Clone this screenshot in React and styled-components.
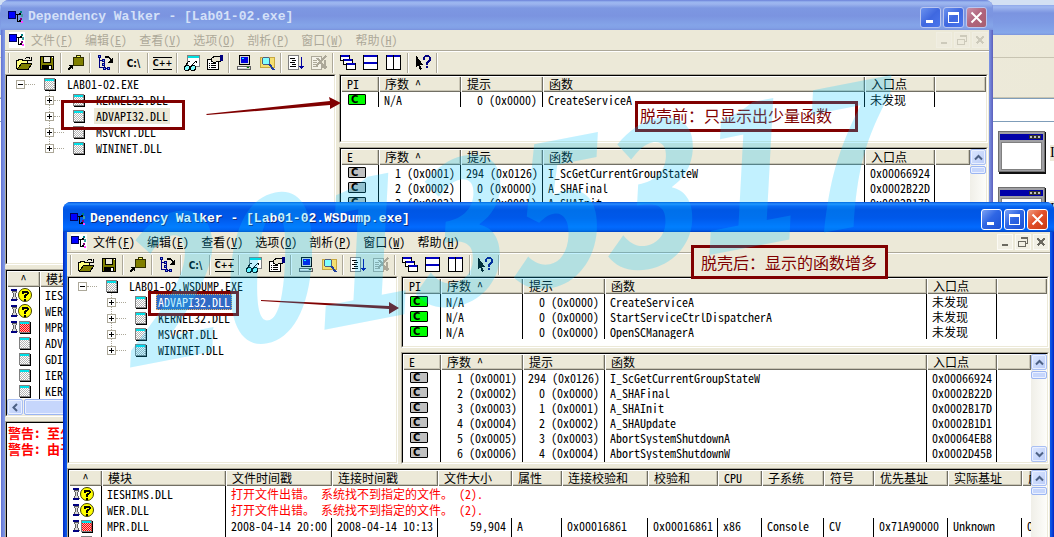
import React from "react";
import styled, { createGlobalStyle, css } from "styled-components";

const face = "#ece9d8";
const maroon = "#800000";

const GlobalStyle = createGlobalStyle`
  *, *::before, *::after { box-sizing: border-box; }
  body {
    margin: 0;
    font: 12px/16px "Noto Sans CJK SC", sans-serif;
    font-feature-settings: "hwid" 1;
    color: #000;
    background: #d3e0f3;
  }
  button { font: inherit; font-feature-settings: inherit; color: inherit; margin: 0; padding: 0; border: 0; background: none; }
  ul { list-style: none; margin: 0; padding: 0; }
`;

const Desktop = styled.main`
  position: relative;
  min-height: 100vh;
  overflow: hidden;
`;

/* ---------- window frame ---------- */

const Frame = styled.section`
  position: absolute;
  display: flex;
  flex-direction: column;
  overflow: hidden;
  border-radius: 8px 8px 0 0;
  padding: 0 4px;
  background: ${(p) => (p.$active ? "linear-gradient(90deg, #0026c4, #0b56e6 3px, #0b56e6 calc(100% - 3px), #0026c4)" : "linear-gradient(90deg, #6372cf, #7d96e6 3px, #7d96e6 calc(100% - 4px), #5c5fbc)")};
`;
const LabFrame = styled(Frame)`
  left: 1px;
  right: 61px;
  top: 0;
  bottom: -40px;
`;
const DumpFrame = styled(Frame)`
  left: 63px;
  right: 0;
  top: 202px;
  bottom: -40px;
`;

const TitleBar = styled.header`
  display: flex;
  align-items: center;
  flex: none;
  height: 30px;
  margin: 0 -4px;
  padding: 4px 6px 0 7px;
  color: ${(p) => (p.$active ? "#fff" : "#d4e0f8")};
  text-shadow: ${(p) => (p.$active ? "1px 1px #0a2a80" : "none")};
  background: ${(p) =>
    p.$active
      ? "linear-gradient(#0050d8 0, #2a8cff 2px, #0a68f4 4px, #0056e4 8px, #0058ea 16px, #026aff 25px, #0160f0 28px, #0040c0 30px)"
      : "linear-gradient(#6a80d8 0, #9ab6f0 2px, #9cb4ee 4px, #7d98e2 8px, #7b94e0 16px, #84a4e8 25px, #82a0e6 28px, #7a92dc 30px)"};
`;
const Title = styled.h1`
  flex: 1;
  margin: 0 0 0 4px;
  white-space: pre;
  overflow: hidden;
  font: bold 13px/20px "Liberation Mono", monospace;
`;
const TitleButtons = styled.div`
  display: flex;
  gap: 2px;
`;
const TitleButton = styled.button`
  display: grid;
  place-items: center;
  width: 21px;
  height: 21px;
  border: 1px solid ${(p) => (p.$active ? "#fff" : "#b9c6f0")};
  border-radius: 3px;
  background: ${(p) =>
    p.$close
      ? p.$active
        ? "linear-gradient(135deg, #ee9a80, #e2502a 45%, #c83a12)"
        : "linear-gradient(135deg, #c890a8, #b0647c 50%, #a85f70)"
      : p.$active
        ? "linear-gradient(135deg, #7ca2f4, #2f66e4 45%, #1c50d4)"
        : "linear-gradient(135deg, #6b92ee, #3f68e0 50%, #4a76ec)"};
`;

const MenuBar = styled.nav`
  display: flex;
  align-items: center;
  flex: none;
  height: 21px;
  padding: 0 1px 0 4px;
  background: ${face};
  border-bottom: 1px solid #aca899;
  color: ${(p) => (p.$active ? "#000" : "#aca899")};
`;
const MenuIcon = styled.span`
  display: grid;
  place-items: center;
  width: 16px;
  height: 16px;
  margin-right: 6px;
  background: #fff;
`;
const MenuItems = styled.div`
  display: flex;
  flex: 1;
  gap: 12px;
`;
const MenuItem = styled.button`
  white-space: nowrap;
  line-height: 18px;
`;
const DocButtons = styled.div`
  display: flex;
  gap: 2px;
`;
const DocButton = styled.button`
  display: grid;
  place-items: center;
  width: 16px;
  height: 16px;
  color: ${(p) => (p.$active ? "#6b6960" : "#cdcabb")};
  background: ${(p) => (p.$active ? "#f1efe4" : "#eeebdd")};
  border: 1px solid ${(p) => (p.$active ? "#fbfaf4" : "#f0eee2")};
`;

const ToolBar = styled.div`
  display: flex;
  align-items: center;
  flex: none;
  height: 23px;
  padding-left: 1px;
  border-top: 1px solid #fff;
  background: ${face};
`;
const Divider = styled.span`
  width: 2px;
  height: 20px;
  margin: 0 2px;
  border-left: 1px solid #aca899;
  border-right: 1px solid #fff;
`;
const ToolButton = styled.button`
  display: grid;
  place-items: center;
  width: 23px;
  height: 22px;
`;
const WordGlyph = styled.span`
  font: bold 10px/11px "DejaVu Sans Condensed", "DejaVu Sans", sans-serif;
  white-space: nowrap;
  ${(p) => p.$ruled && css`
    font-size: 9px;
    border-top: 1px solid #000;
    border-bottom: 1px solid #000;
  `}
`;

/* ---------- panes ---------- */

const Client = styled.div`
  display: flex;
  flex-direction: column;
  flex: 1;
  min-height: 0;
  gap: 4px;
  padding-right: 1px;
  background: ${face};
`;
const Upper = styled.div`
  display: flex;
  flex: none;
  gap: 3px;
  height: ${(p) => p.$height}px;
`;
const RightSide = styled.div`
  display: flex;
  flex-direction: column;
  flex: 1;
  min-width: 0;
  gap: 4px;
`;
const Pane = styled.div`
  display: flex;
  flex-direction: column;
  flex: ${(p) => (p.$height ? `0 0 ${p.$height}px` : "1 1 0")};
  min-height: 0;
  min-width: 0;
  border: 1px solid;
  border-color: #aca899 #fff #fff #aca899;
`;
const TreePane = styled(Pane)`
  flex: 0 0 331px;
`;
const PaneBody = styled.div`
  display: flex;
  flex: 1;
  min-height: 0;
  overflow: hidden;
  background: #fff;
  border: 1px solid;
  border-color: #000 ${face} ${face} #000;
`;
const TableArea = styled.div`
  flex: 1;
  min-width: 0;
  overflow: hidden;
`;

/* ---------- tables ---------- */

const Table = styled.table`
  width: 100%;
  table-layout: fixed;
  border-collapse: separate;
  border-spacing: 0;
`;
const Th = styled.th`
  height: 16px;
  padding: 0 0 0 ${(p) => (p.$center ? 0 : 6)}px;
  overflow: hidden;
  white-space: pre;
  font-weight: normal;
  line-height: 16px;
  text-align: ${(p) => (p.$center ? "center" : "left")};
  background: ${face};
  box-shadow: inset 1px 1px #fff, inset -1px -1px #716f64, inset -2px -2px #c9c5b4;
`;
const Td = styled.td`
  height: ${(p) => p.$row}px;
  padding: 0 5px;
  overflow: hidden;
  white-space: pre;
  line-height: ${(p) => p.$row}px;
  text-align: ${(p) => (p.$right ? "right" : "left")};
  border-right: ${(p) => (p.$open ? 0 : 1)}px solid #000;
  ${(p) => p.$error && css`
    color: #f00;
    font-feature-settings: normal;
  `}
`;
const IconTd = styled(Td)`
  padding: 0 0 0 ${(p) => p.$inset}px;
  svg { display: block; }
`;
const Half = styled.span`
  font-feature-settings: "hwid" 1;
`;
const CallBadge = styled.span`
  display: block;
  width: 18px;
  height: 11px;
  padding-left: 2px;
  border: 1px solid #000;
  border-radius: 1px;
  background: ${(p) => (p.$found ? "#c0c0c0" : "#00ff00")};
  font: bold 10px/9px "DejaVu Sans", sans-serif;
`;

/* ---------- scroll bars ---------- */

const ScrollV = styled.div`
  display: flex;
  flex-direction: column;
  flex: 0 0 16px;
  gap: 1px;
  background: linear-gradient(90deg, #f0efe8, #fdfdfa);
`;
const ScrollH = styled(ScrollV)`
  flex-direction: row;
`;
const ScrollButton = styled.button`
  display: grid;
  place-items: center;
  flex: none;
  width: 16px;
  height: 16px;
  border: 1px solid #a9bff3;
  border-radius: 2px;
  box-shadow: inset 0 0 0 1px #eaf0ff;
  background: linear-gradient(135deg, #dce7ff, #b9cbf8);
`;
const Thumb = styled.div`
  flex: ${(p) => (p.$long ? "1" : "0 0 8px")};
  border: 1px solid #9bb5f2;
  border-radius: 2px;
  box-shadow: inset 0 0 0 1px #eaf0ff;
  background: #c6d6fc;
`;
const Track = styled.div`
  flex: 1;
`;

/* ---------- tree ---------- */

const Tree = styled.ul`
  flex: 1;
`;
const TreeRow = styled.div`
  display: flex;
  align-items: center;
  height: 16px;
  padding-left: ${(p) => (p.$child ? 38 : 9)}px;
`;
const Toggle = styled.button`
  position: relative;
  display: grid;
  place-items: center;
  width: 9px;
  height: 9px;
  border: 1px solid #aca899;
  background: #fff;
  ${(p) => p.$child && css`
    &::before {
      content: "";
      position: absolute;
      left: 3px;
      bottom: 8px;
      height: 7px;
      border-left: 1px dotted #aca899;
    }
  `}
`;
const Branch = styled.span`
  width: 10px;
  margin-right: 9px;
  border-top: 1px dotted #aca899;
`;
const Label = styled.span`
  margin-left: 9px;
  padding: 0 2px;
  white-space: pre;
  ${(p) => p.$state === "idle" && css`background: ${face};`}
  ${(p) => p.$state === "focus" && css`
    color: #fff;
    background: #316ac5;
    outline: 1px dotted #e8b060;
    outline-offset: -1px;
  `}
`;

const Log = styled.div`
  flex: 1;
  padding: 2px 1px;
  overflow: hidden;
  white-space: nowrap;
  color: #f00;
  font-size: 13px;
  font-weight: bold;
`;
const LogLine = styled.p`
  margin: 0;
`;
const ModulesStack = styled.div`
  display: flex;
  flex-direction: column;
  flex: 1;
  min-width: 0;
`;

/* ---------- window at the back ---------- */

const BackFrame = styled.section`
  position: absolute;
  inset: 5px 0 0 0;
  display: flex;
  flex-direction: column;
  background: #fff;
`;
const BackTitle = styled.div`
  height: 30px;
  background: linear-gradient(#8fa8ea 0, #a0b8f0 2px, #7b94e0 8px, #7e9ae4 18px, #86a8ea 28px, #7c94dc);
`;
const BackBar = styled.div`
  height: ${(p) => p.$height}px;
  background: linear-gradient(90deg, #f2f1ea, ${face});
  border-bottom: 1px solid #c8c4b2;
`;
const BackAddress = styled.div`
  height: 24px;
  border: solid #7f9db9;
  border-width: 1px 0;
  background: #fff;
`;
const FileList = styled.ul`
  display: flex;
  flex-direction: column;
  align-items: flex-end;
  gap: 13px;
  padding-top: 9px;
`;
const FileItem = styled.li`
  display: flex;
  align-items: center;
  gap: 4px;
  font: 14px/16px "Liberation Serif", serif;
`;
const FileName = styled.span`
  width: 4px;
  overflow: hidden;
  background: ${face};
`;

/* ---------- marks drawn over the windows ---------- */

const Marks = styled.div`
  position: absolute;
  inset: 0;
  overflow: hidden;
  pointer-events: none;
`;
const Ring = styled.div`
  position: absolute;
  left: ${(p) => p.$x}px;
  top: ${(p) => p.$y}px;
  width: ${(p) => p.$w}px;
  height: ${(p) => p.$h}px;
  border: 3px solid ${maroon};
`;
const Note = styled(Ring)`
  padding-left: ${(p) => p.$pad}px;
  color: ${maroon};
  background: ${(p) => p.$fill};
  font-size: 16px;
  line-height: ${(p) => p.$line}px;
  font-feature-settings: normal;
  white-space: nowrap;
`;
const Overlay = styled.svg`
  position: absolute;
  left: 0;
  top: 0;
  width: 1054px;
  height: 537px;
`;
const MarkText = styled.div`
  position: absolute;
  left: 122px;
  top: 204px;
  transform: rotate(-11deg);
  transform-origin: 0 100%;
  font: italic bold 196px/160px "Noto Sans CJK SC", sans-serif;
  font-feature-settings: "hwid" 1;
  color: rgba(0, 197, 255, 0.24);
`;

/* ---------- drawings ---------- */

const Px = ({ w = 16, h = 16, children }) => (
  <svg width={w} height={h} viewBox={`0 0 ${w} ${h}`} shapeRendering="crispEdges" aria-hidden="true">
    {children}
  </svg>
);
const L = ({ d, c = "#000", w = 1 }) => <path d={d} stroke={c} strokeWidth={w} fill="none" />;
const B = ({ x, y, w, h, f = "#fff", s }) => (
  <rect x={s ? x + 0.5 : x} y={s ? y + 0.5 : y} width={s ? w - 1 : w} height={s ? h - 1 : h} fill={f} stroke={s || "none"} />
);

const AppIcon = () => (
  <Px>
    <B x={0} y={2} w={8} h={8} f="#0000ff" s="#000060" />
    <L d="M8 5.500h4M9.500 5v8M9 12.500h3M12 4.500h1" />
    <B x={12} y={2} w={2} h={2} f="#008080" />
    <B x={11} y={4} w={2} h={2} f="#000" />
    <B x={13} y={5} w={2} h={3} f="#40a0a0" />
    <B x={12} y={9} w={2} h={2} f="#800080" />
    <B x={11} y={11} w={2} h={2} f="#000" />
    <B x={13} y={12} w={2} h={2} f="#ff40ff" />
  </Px>
);
const OpenIcon = () => (
  <Px>
    <path d="M1 14V5h1l1-1h3l1 1h4v3h4l-4 6z" fill="#ffff80" stroke="none" />
    <path d="M1 14L5 8h11l-4 6z" fill="#808000" />
    <L d="M.5 14V5.500h1.500l1-1h3l1 1h4.500V8M1 14.500h11L16 8.500H5.500L1.500 14M9 3.500l2-1h2l1.500 2M15.500 2v3.500H12" />
  </Px>
);
const SaveIcon = () => (
  <Px>
    <B x={1} y={1} w={14} h={14} f="#808000" s="#000" />
    <B x={4} y={1} w={8} h={7} f="#ece9d8" s="#000" />
    <B x={3} y={10} w={10} h={5} f="#000" />
    <B x={10} y={11} w={2} h={3} f="#fff" />
    <B x={13} y={2} w={1} h={1} f="#fff" />
  </Px>
);
const AutoExpandIcon = () => (
  <Px>
    <B x={5} y={2} w={11} h={9} f="#808000" s="#303000" />
    <B x={8} y={0} w={5} h={3} f="#ffff60" s="#303000" />
    <L d="M0 15L4 11" w={2} />
    <B x={1} y={10} w={4} h={1} f="#000" />
    <B x={4} y={10} w={1} h={4} f="#000" />
  </Px>
);
const TreeIcon = () => (
  <Px>
    <L d="M2.500 1V13M2 5.500h4M2 12.500h4M8 7.500h0M7.500 7v5M8 13.500h3" c="#000080" />
    {[[1, 0], [5, 4], [5, 8], [6, 12], [10, 12]].map(([x, y]) => (
      <B key={`${x}-${y}`} x={x} y={y} w={3} h={3} f="#60a8ff" s="#000080" />
    ))}
    <L d="M8 1.500h3l3 3" w={2} />
    <path d="M16 2v6h-6z" fill="#000" />
  </Px>
);
const ViewerIcon = () => (
  <Px>
    <B x={3} y={0} w={13} h={12} f="#fff" s="#808080" />
    <B x={4} y={1} w={11} h={2} f="#00e0e0" />
    <L d="M1 11l4-5 1 1M7 11l5-5 1 2M5 12.500h3" />
    <ellipse cx="3" cy="13" rx="2.500" ry="2.500" fill="#80ffff" stroke="#000" />
    <ellipse cx="9" cy="13" rx="2.500" ry="2.500" fill="#80ffff" stroke="#000" />
  </Px>
);
const PropsIcon = () => (
  <Px>
    <B x={0} y={4} w={12} h={11} f="#fff" s="#000" />
    <L d="M2 8.500h1M4 8.500h5M2 10.500h1M4 10.500h5M2 12.500h1M4 12.500h5" />
    <path d="M4 4l4-3h5v5h-3L8 8 4 6z" fill="#e8e4d0" stroke="#000" />
    <B x={13} y={0} w={3} h={6} f="#000080" />
  </Px>
);
const ComputerIcon = () => (
  <Px>
    <B x={3} y={0} w={11} h={10} f="#d8d8d8" s="#000" />
    <B x={5} y={2} w={7} h={6} f="#0000e0" />
    <B x={6} y={3} w={2} h={1} f="#00ffff" />
    <B x={1} y={11} w={14} h={4} f="#d0d0d0" s="#606060" />
    <B x={2} y={12} w={8} h={1} f="#fff" />
    <B x={11} y={12} w={2} h={1} f="#008000" />
  </Px>
);
const SearchIcon = () => (
  <Px>
    <B x={1} y={2} w={15} h={11} f="#f4e070" s="#c8a840" />
    <circle cx="7" cy="6" r="4" fill="#80ffff" stroke="#506080" />
    <L d="M10 9l5 6" c="#2040a0" w={2} />
  </Px>
);
const SortIcon = () => (
  <Px>
    <B x={0} y={0} w={11} h={15} f="#fff" s="#808080" />
    <L d="M2 3.500h5M4 5.500h4M2 7.500h5M4 9.500h4M2 11.500h6" />
    <L d="M13.500 2v12M11 11.500h5M12 12.500h3" c="#0000a0" />
  </Px>
);
const ClearIcon = () => (
  <Px>
    <B x={0} y={1} w={11} h={14} f="#f4f2e8" s="#aca899" />
    <L d="M2 5.500h4M2 7.500h4M2 9.500h4M2 11.500h5" c="#aca899" />
    <L d="M5 11L15 1M6 3l7 8M13.500 5v9M11 11.500h5" c="#aca899" w={2} />
  </Px>
);
const MiniWindow = ({ x, y, w, h }) => (
  <>
    <B x={x} y={y} w={w} h={h} f="#fff" s="#000" />
    <B x={x + 1} y={y} w={w - 2} h={2} f="#0000c0" />
  </>
);
const CascadeIcon = () => (
  <Px>
    <MiniWindow x={0} y={0} w={10} h={6} />
    <MiniWindow x={3} y={4} w={10} h={6} />
    <MiniWindow x={6} y={8} w={10} h={7} />
  </Px>
);
const TileHIcon = () => (
  <Px>
    <MiniWindow x={0} y={0} w={15} h={8} />
    <MiniWindow x={0} y={7} w={15} h={8} />
  </Px>
);
const TileVIcon = () => (
  <Px>
    <MiniWindow x={0} y={0} w={8} h={15} />
    <MiniWindow x={7} y={0} w={8} h={15} />
  </Px>
);
const HelpIcon = () => (
  <Px>
    <path d="M1 0v12l2-2 2 5 2-1-2-4h3z" fill="#000" />
    <path d="M9 5V2.500L10.500 1h3L15 2.500V5l-3 3v2M12 11v2" fill="none" stroke="#000080" strokeWidth="2" />
  </Px>
);
const ModuleIcon = ({ red }) => (
  <Px w={12} h={13}>
    <B x={1} y={1} w={11} h={12} f="#000" />
    <B x={0} y={0} w={11} h={12} f={red ? "#ffb0b0" : "#fff"} s="#808080" />
    {Array.from({ length: 8 }, (_, r) => (
      <path key={r} d={`M${1 + (r % 2)} ${3.5 + r}h9`} stroke={red ? "#ff0000" : "#b4b4b4"} strokeDasharray="1 1" />
    ))}
    <B x={1} y={1} w={9} h={2} f="#00e0e8" />
  </Px>
);
const ModuleStatus = ({ kind }) => (
  <Px w={29} h={14}>
    {kind !== "plain" && (
      <>
        <path d="M2 3h5l-2 4 2 4H2l2-4z" fill="#d8d8d8" stroke="#606060" />
        <B x={1} y={1} w={6} h={2} f="#000080" />
        <B x={1} y={11} w={6} h={2} f="#000080" />
      </>
    )}
    {kind === "missing" ? (
      <>
        <circle cx="15" cy="7" r="6.500" fill="#ffff00" stroke="#404000" shapeRendering="auto" />
        <path d="M12.500 5.500V4.500l1.500-1h2l1.500 1v1.500L15 8v1.500M15 10.500v2" fill="none" stroke="#000" strokeWidth="2" />
      </>
    ) : (
      <svg x="9" y="1" width="12" height="13">
        <ModuleIcon red={kind === "delay"} />
      </svg>
    )}
  </Px>
);
const FileIcon = () => (
  <Px w={48} h={43}>
    <B x={1} y={1} w={47} h={42} f="#101010" />
    <B x={0} y={0} w={47} h={41} f="#a0a0a4" s="#707070" />
    <B x={2} y={3} w={43} h={6} f="#0000a8" />
    {[31, 35, 39].map((x) => <B key={x} x={x} y={4} w={4} h={4} f="#c0c0c0" s="#303030" />)}
    <B x={3} y={11} w={41} h={28} f="#fff" s="#808080" />
  </Px>
);
const Chevron = ({ d }) => (
  <svg width="9" height="9" viewBox="0 0 9 9" aria-hidden="true">
    <path d={d} fill="none" stroke="#4d6185" strokeWidth="2" />
  </svg>
);
const UP = "M1 6.500L4.500 3 8 6.500";
const DOWN = "M1 2.500L4.500 6 8 2.500";
const LEFT = "M6 1L2.500 4.500 6 8";

const Plus = ({ open }) => (
  <Px w={5} h={5}>
    <L d={open ? "M0 2.500h5" : "M0 2.500h5M2.500 0v5"} />
  </Px>
);

/* ---------- parts ---------- */

const menus = [["文件", "F"], ["编辑", "E"], ["查看", "V"], ["选项", "O"], ["剖析", "P"], ["窗口", "W"], ["帮助", "H"]];

const tools = [
  ["打开", <OpenIcon />], ["保存", <SaveIcon />], null,
  ["自动展开", <AutoExpandIcon />], null,
  ["完整路径", <TreeIcon />], null,
  ["路径", <WordGlyph>C:\</WordGlyph>], null,
  ["还原名称", <WordGlyph $ruled>C++</WordGlyph>], null,
  ["外部查看器", <ViewerIcon />], ["属性", <PropsIcon />], null,
  ["系统信息", <ComputerIcon />], ["搜索顺序", <SearchIcon />], null,
  ["开始剖析", <SortIcon />], ["停止剖析", <ClearIcon />], null,
  ["层叠", <CascadeIcon />], ["横向平铺", <TileHIcon />], ["纵向平铺", <TileVIcon />], null,
  ["帮助", <HelpIcon />],
];

const Chrome = ({ title, active }) => (
  <>
    <TitleBar $active={active}>
      <AppIcon />
      <Title>{title}</Title>
      <TitleButtons>
        <TitleButton $active={active} aria-label="最小化">
          <Px w={13} h={13}><B x={2} y={9} w={7} h={3} /></Px>
        </TitleButton>
        <TitleButton $active={active} aria-label="最大化">
          <Px w={13} h={13}><L d="M1.500 1v11M11.500 1v11M1 11.500h11" c="#fff" /><B x={1} y={1} w={11} h={3} /></Px>
        </TitleButton>
        <TitleButton $active={active} $close aria-label="关闭">
          <svg width="13" height="13" aria-hidden="true"><path d="M1.500 1.500l10 10M11.500 1.500l-10 10" stroke="#fff" strokeWidth="2" /></svg>
        </TitleButton>
      </TitleButtons>
    </TitleBar>
    <MenuBar $active={active}>
      <MenuIcon><AppIcon /></MenuIcon>
      <MenuItems>
        {menus.map(([name, key]) => (
          <MenuItem key={key}>{name}(<u>{key}</u>)</MenuItem>
        ))}
      </MenuItems>
      <DocButtons>
        <DocButton $active={active} aria-label="最小化文档">
          <Px w={10} h={10}><B x={2} y={7} w={6} h={2} f="currentColor" /></Px>
        </DocButton>
        <DocButton $active={active} aria-label="还原文档">
          <Px w={10} h={10}><L d="M3 .5h7M3 1.500h7M9.500 1v5M8 6.500h2M.5 4v6M7.500 4v6M0 4.500h8M0 9.500h8" c="currentColor" /></Px>
        </DocButton>
        <DocButton $active={active} aria-label="关闭文档">
          <Px w={10} h={10}><L d="M1.500 1.500l7 7M8.500 1.500l-7 7" c="currentColor" w={2} /></Px>
        </DocButton>
      </DocButtons>
    </MenuBar>
    <ToolBar>
      <Divider />
      {tools.map((t, i) => (t ? <ToolButton key={i} aria-label={t[0]}>{t[1]}</ToolButton> : <Divider key={i} />))}
      <Divider />
    </ToolBar>
  </>
);

const Node = ({ name, child, state }) => (
  <TreeRow $child={child}>
    <Toggle $child={child} aria-label={child ? "展开" : "折叠"}><Plus open={!child} /></Toggle>
    <Branch />
    <ModuleIcon />
    <Label $state={state}>{name}</Label>
  </TreeRow>
);

const ModuleTree = ({ root, items, selected, state }) => (
  <TreePane>
    <PaneBody>
      <Tree>
        <li>
          <Node name={root} />
          <ul>
            {items.map((n) => (
              <li key={n}><Node child name={n} state={n === selected ? state : undefined} /></li>
            ))}
          </ul>
        </li>
      </Tree>
    </PaneBody>
  </TreePane>
);

const VScroll = () => (
  <ScrollV>
    <ScrollButton aria-label="向上滚动"><Chevron d={UP} /></ScrollButton>
    <Thumb />
    <Track />
    <ScrollButton aria-label="向下滚动"><Chevron d={DOWN} /></ScrollButton>
  </ScrollV>
);

const FunctionList = ({ first, rows, found, height, scroll }) => (
  <Pane $height={height}>
    <PaneBody>
      <TableArea>
        <Table>
          <colgroup>
            {[38, 82, 82, 322, 70].map((w, i) => <col key={i} width={w} />)}
            <col />
          </colgroup>
          <thead>
            <tr>{[first, "序数 ^", "提示", "函数", "入口点", ""].map((h, i) => <Th key={i}>{h}</Th>)}</tr>
          </thead>
          <tbody>
            {rows.map(([ord, hint, fn, entry]) => (
              <tr key={fn}>
                <IconTd $row={15} $inset={7}><CallBadge $found={found}>C</CallBadge></IconTd>
                <Td $row={15} $right={found}>{ord}</Td>
                <Td $row={15} $right>{hint}</Td>
                <Td $row={15}>{fn}</Td>
                <Td $row={15}>{entry}</Td>
                <Td $row={15} $open />
              </tr>
            ))}
          </tbody>
        </Table>
      </TableArea>
      {scroll && <VScroll />}
    </PaneBody>
  </Pane>
);

const moduleCols = [
  ["^", 33], ["模块", 124], ["文件时间戳", 106], ["连接时间戳", 106], ["文件大小", 74], ["属性", 50], ["连接校验和", 86],
  ["校验和", 70], ["CPU", 44], ["子系统", 62], ["符号", 50], ["优先基址", 74], ["实际基址", 74], ["虚拟大小"],
];

const ModuleTable = ({ rows }) => (
  <TableArea>
    <Table>
      <colgroup>{moduleCols.map(([h, w]) => <col key={h} width={w} />)}</colgroup>
      <thead>
        <tr>{moduleCols.map(([h], i) => <Th key={h} $center={i === 0}>{h}</Th>)}</tr>
      </thead>
      <tbody>
        {rows.map(({ kind, name, cells }) => (
          <tr key={name}>
            <IconTd $row={16} $inset={3}><ModuleStatus kind={kind} /></IconTd>
            <Td $row={16}>{name}</Td>
            {kind === "missing" ? (
              <Td $row={16} $error $open colSpan={12}>打开文件出错。<Half> </Half>系统找不到指定的文件。<Half> (2).</Half></Td>
            ) : (
              moduleCols.slice(2).map(([h], i) => (
                <Td key={h} $row={16} $right={i === 2} $open={i === 11}>{cells ? cells[i] : ""}</Td>
              ))
            )}
          </tr>
        ))}
      </tbody>
    </Table>
  </TableArea>
);

/* ---------- data ---------- */

const missing = [
  ["N/A", "0 (0x0000)", "CreateServiceA", "未发现"],
  ["N/A", "0 (0x0000)", "StartServiceCtrlDispatcherA", "未发现"],
  ["N/A", "0 (0x0000)", "OpenSCManagerA", "未发现"],
];
const exported = [
  ["1 (0x0001)", "294 (0x0126)", "I_ScGetCurrentGroupStateW", "0x00066924"],
  ["2 (0x0002)", "0 (0x0000)", "A_SHAFinal", "0x0002B22D"],
  ["3 (0x0003)", "1 (0x0001)", "A_SHAInit", "0x0002B17D"],
  ["4 (0x0004)", "2 (0x0002)", "A_SHAUpdate", "0x0002B1D1"],
  ["5 (0x0005)", "3 (0x0003)", "AbortSystemShutdownA", "0x00064EB8"],
  ["6 (0x0006)", "4 (0x0004)", "AbortSystemShutdownW", "0x0002D45B"],
  ["7 (0x0007)", "5 (0x0005)", "AccessCheck", "0x00006E5B"],
];
const mprCells = ["2008-04-14 20:00", "2008-04-14 10:13", "59,904", "A", "0x00016861", "0x00016861", "x86", "Console", "CV", "0x71A90000", "Unknown", "0x00012000"];
const modules = [
  { kind: "missing", name: "IESHIMS.DLL" },
  { kind: "missing", name: "WER.DLL" },
  { kind: "delay", name: "MPR.DLL", cells: mprCells },
  { kind: "plain", name: "ADVAPI32.DLL" },
  { kind: "plain", name: "GDI32.DLL" },
  { kind: "plain", name: "IERTUTIL.DLL" },
  { kind: "plain", name: "KERNEL32.DLL" },
];

export default function App() {
  return (
    <Desktop>
      <GlobalStyle />
      <BackFrame>
        <BackTitle />
        <BackBar $height={23} />
        <BackBar $height={40} />
        <BackAddress />
        <FileList>
          <FileItem><FileIcon /><FileName>I</FileName></FileItem>
          <FileItem><FileIcon /><FileName>I</FileName></FileItem>
        </FileList>
      </BackFrame>

      <LabFrame>
        <Chrome title="Dependency Walker - [Lab01-02.exe]" />
        <Client>
          <Upper $height={191}>
            <ModuleTree
              root="LAB01-02.EXE"
              items={["KERNEL32.DLL", "ADVAPI32.DLL", "MSVCRT.DLL", "WININET.DLL"]}
              selected="ADVAPI32.DLL"
              state="idle"
            />
            <RightSide>
              <FunctionList first="PI" rows={missing.slice(0, 1)} height={69} />
              <FunctionList first="E" rows={exported.slice(0, 3)} found scroll />
            </RightSide>
          </Upper>
          <Pane $height={148}>
            <PaneBody>
              <ModulesStack>
                <ModuleTable rows={modules} />
                <ScrollH>
                  <ScrollButton aria-label="向左滚动"><Chevron d={LEFT} /></ScrollButton>
                  <Thumb $long />
                </ScrollH>
              </ModulesStack>
            </PaneBody>
          </Pane>
          <Pane>
            <PaneBody>
              <Log>
                <LogLine>警告: 至少</LogLine>
                <LogLine>警告: 由于</LogLine>
              </Log>
            </PaneBody>
          </Pane>
        </Client>
      </LabFrame>

      <DumpFrame $active>
        <Chrome active title="Dependency Walker - [Lab01-02.WSDump.exe]" />
        <Client>
          <Upper $height={188}>
            <ModuleTree
              root="LAB01-02.WSDUMP.EXE"
              items={["ADVAPI32.DLL", "KERNEL32.DLL", "MSVCRT.DLL", "WININET.DLL"]}
              selected="ADVAPI32.DLL"
              state="focus"
            />
            <RightSide>
              <FunctionList first="PI" rows={missing} height={72} />
              <FunctionList first="E" rows={exported} found scroll />
            </RightSide>
          </Upper>
          <Pane>
            <PaneBody>
              <ModuleTable rows={modules.slice(0, 4)} />
              <VScroll />
            </PaneBody>
          </Pane>
        </Client>
      </DumpFrame>

      <Marks>
        <Ring $x={61} $y={100} $w={124} $h={30} />
        <Ring $x={148} $y={291} $w={91} $h={25} />
        <Note $x={635} $y={101} $w={223} $h={31} $pad={2} $line={22} $fill="#fff">脱壳前：只显示出少量函数</Note>
        <Note $x={691} $y={245} $w={197} $h={34} $pad={7} $line={28} $fill={face}>脱壳后：显示的函数增多</Note>
        <Overlay aria-hidden="true">
          <path d="M206 114L330 101l-1-4 12 6-11 6v-4L207 115z" fill={maroon} />
          <path d="M261 300l128 6v-4l10 6-10 6v-5l-128-8z" fill={maroon} />
        </Overlay>
        <MarkText>20135317</MarkText>
      </Marks>
    </Desktop>
  );
}
